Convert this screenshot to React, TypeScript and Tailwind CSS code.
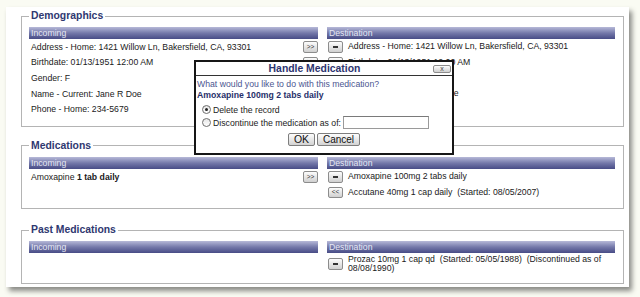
import React from "react";

function SmallBtn({ children }: { children?: React.ReactNode }) {
  return (
    <span className="flex h-[11.6px] w-[15px] shrink-0 items-center justify-center rounded-[2px] border border-[#8c8c8c] bg-linear-to-b from-[#fdfdfd] to-[#d0d0d0] text-[6.5px] leading-none text-[#333]">
      {children}
    </span>
  );
}

function Minus() {
  return (
    <SmallBtn>
      <span className="h-[1.5px] w-[5px] bg-[#333]" />
    </SmallBtn>
  );
}

function Bar({ label }: { label: string }) {
  return (
    <div className="h-[12px] bg-linear-to-b from-[#b7b9d8] via-[#7579aa] to-[#484c86] pl-[2px] leading-[12px] text-[#e6e7f4]">
      {label}
    </div>
  );
}

function InRow({ children }: { children: React.ReactNode }) {
  return (
    <div className="flex items-center justify-between py-[2px] pl-[2px]">
      <span className="leading-[10px]">{children}</span>
      <SmallBtn>&gt;&gt;</SmallBtn>
    </div>
  );
}

function OutRow({
  children,
  btn,
}: {
  children: React.ReactNode;
  btn?: React.ReactNode;
}) {
  return (
    <div className="flex items-center py-[2px] pl-[1px]">
      {btn ?? <Minus />}
      <span className="ml-[5px] leading-[9px]">{children}</span>
    </div>
  );
}

function Section({
  title,
  incoming,
  destination,
  className,
}: {
  title: string;
  incoming: React.ReactNode;
  destination: React.ReactNode;
  className: string;
}) {
  return (
    <fieldset className={`border border-[#b4b4b4] px-[7px] pt-[5px] ${className}`}>
      <legend className="px-[2px] text-[10.4px] font-bold leading-[12px] text-[#2f3870]">
        {title}
      </legend>
      <div className="grid grid-cols-[289px_288px] gap-x-[9px]">
        <div>
          <Bar label="Incoming" />
          {incoming}
        </div>
        <div>
          <Bar label="Destination" />
          {destination}
        </div>
      </div>
    </fieldset>
  );
}

const demographics = [
  "Address - Home: 1421 Willow Ln, Bakersfield, CA, 93301",
  "Birthdate: 01/13/1951 12:00 AM",
  "Gender: F",
  "Name - Current: Jane R Doe",
  "Phone - Home: 234-5679",
];

export default function App() {
  return (
    <div className="relative h-[297px] w-[640px] overflow-hidden bg-[#fafbf3] font-['Liberation_Sans',Arial,sans-serif] text-[8.7px] text-[#1a1a1a]">
      <div className="ml-[6px] mt-[7px] h-[280px] w-[623px] bg-white pl-[15px] pr-[5px] pt-[3px] shadow-[3px_4px_5px_rgba(0,0,0,0.45)]">
        <Section
          title="Demographics"
          className="pb-[9px]"
          incoming={demographics.map((d) => (
            <InRow key={d}>{d}</InRow>
          ))}
          destination={demographics.map((d) => (
            <OutRow key={d}>{d}</OutRow>
          ))}
        />
        <Section
          title="Medications"
          className="mt-[13px] pb-[8px]"
          incoming={
            <InRow>
              Amoxapine <b>1 tab daily</b>
            </InRow>
          }
          destination={
            <>
              <OutRow>Amoxapine 100mg 2 tabs daily</OutRow>
              <OutRow btn={<SmallBtn>&lt;&lt;</SmallBtn>}>
                Accutane 40mg 1 cap daily{"\u00a0 "}(Started: 08/05/2007)
              </OutRow>
            </>
          }
        />
        <Section
          title="Past Medications"
          className="mt-[15px] pb-[8px]"
          incoming={null}
          destination={
            <OutRow>
              Prozac 10mg 1 cap qd{"\u00a0 "}(Started: 05/05/1988){"\u00a0 "}(Discontinued as of
              08/08/1990)
            </OutRow>
          }
        />
      </div>

      {/* dialog */}
      <div className="absolute left-[194px] top-[60px] h-[95px] w-[260px] border-2 border-[#161616] bg-white">
        <div className="flex h-[14px] items-center border-b border-[#333]">
          <div className="flex-1 text-center text-[10.4px] font-bold leading-[13px] text-[#2c3470]">
            Handle Medication
          </div>
          <span className="mr-[1px] flex h-[8px] w-[18px] items-center justify-center rounded-[2px] border border-[#8c8c8c] bg-linear-to-b from-[#fdfdfd] to-[#cfcfcf] text-[7px] leading-[6px] text-[#444]">
            x
          </span>
        </div>
        <div className="px-[1px] pt-[3px]">
          <div className="leading-[11px] text-[#4b5690]">
            What would you like to do with this medication?
          </div>
          <div className="font-bold leading-[11px] text-[#27306a]">
            Amoxapine 100mg 2 tabs daily
          </div>
          <div className="mt-[2px] flex h-[13px] items-center pl-[5px]">
            <span className="flex h-[9px] w-[9px] items-center justify-center rounded-full border border-[#6e6e6e] bg-linear-to-b from-[#e6e6e6] to-white">
              <span className="h-[3px] w-[3px] rounded-full bg-[#222]" />
            </span>
            <span className="ml-[2px] leading-[10px]">Delete the record</span>
          </div>
          <div className="flex h-[13px] items-center pl-[5px]">
            <span className="h-[9px] w-[9px] rounded-full border border-[#6e6e6e] bg-linear-to-b from-[#e6e6e6] to-white" />
            <span className="ml-[2px] leading-[10px]">Discontinue the medication as of:</span>
            <span className="ml-[2px] h-[13px] w-[86px] border border-[#9a9a9a] border-t-[#7a7a7a] bg-white" />
          </div>
          <div className="mt-[4px] flex justify-center gap-[2px]">
            <span className="flex h-[13px] w-[27px] items-center justify-center rounded-[2px] border border-[#7e7e7e] bg-linear-to-b from-[#fdfdfd] to-[#d3d3d3] text-[10.5px] leading-none text-[#111]">
              OK
            </span>
            <span className="flex h-[13px] w-[43px] items-center justify-center rounded-[2px] border border-[#7e7e7e] bg-linear-to-b from-[#fdfdfd] to-[#d3d3d3] text-[10px] leading-none text-[#111]">
              Cancel
            </span>
          </div>
        </div>
      </div>
    </div>
  );
}
